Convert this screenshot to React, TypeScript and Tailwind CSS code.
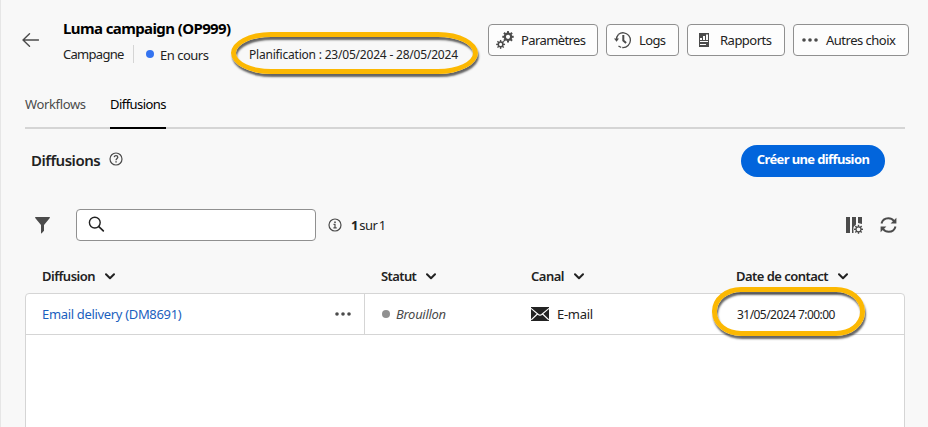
import React from 'react';

type IconProps = { className?: string };

function Gear({ cx, cy, r, teeth, w, stroke }: { cx: number; cy: number; r: number; teeth: number; w: number; stroke: number }) {
  return (
    <g>
      <circle cx={cx} cy={cy} r={r} fill="none" stroke="currentColor" strokeWidth={stroke} />
      {Array.from({ length: teeth }, (_, i) => (
        <rect
          key={i}
          x={cx - w / 2}
          y={cy - r - stroke / 2 - 1.4}
          width={w}
          height={2}
          fill="currentColor"
          transform={`rotate(${(360 / teeth) * i} ${cx} ${cy})`}
        />
      ))}
    </g>
  );
}

const GearsIcon = ({ className }: IconProps) => (
  <svg className={className} width="18" height="18" viewBox="0 0 18 18">
    <Gear cx={12} cy={5.8} r={3.2} teeth={8} w={2} stroke={2.2} />
    <Gear cx={4.6} cy={13.4} r={2.3} teeth={8} w={1.4} stroke={1.5} />
  </svg>
);

const HistoryIcon = ({ className }: IconProps) => (
  <svg className={className} width="18" height="18" viewBox="0 0 18 18" fill="none" stroke="currentColor">
    <path d="M4.6 3.2A7.4 7.4 0 1 1 4 14.600" strokeWidth="1.3" strokeDasharray="28 1 3 1 4 20" />
    <path d="M2.5 9A7.4 7.4 0 0 1 4.600 3.2" strokeWidth="1.3" />
    <path d="M0 7.500h5L2.6 10.800z" fill="currentColor" stroke="none" />
    <path d="M9.3 4v5.600l2.800 2.400" strokeWidth="2" />
  </svg>
);

const ReportIcon = ({ className }: IconProps) => (
  <svg className={className} width="10" height="14" viewBox="0 0 10 14">
    <path fill="currentColor" d="M0 0h10v14H0z" />
    <path fill="#fdfdfd" d="M1 5h2v2H1zM4 3h2v4H4zM7 1.500h2V7H7zM1 8h8v1H1zM1 11h6v1H1z" />
  </svg>
);

const MoreIcon = ({ className }: IconProps) => (
  <svg className={className} width="16" height="4" viewBox="0 0 16 4" fill="currentColor">
    <circle cx="2" cy="2" r="1.8" />
    <circle cx="8" cy="2" r="1.8" />
    <circle cx="14" cy="2" r="1.8" />
  </svg>
);

const Chevron = () => (
  <svg width="10" height="7" viewBox="0 0 10 7" fill="none" stroke="#222" strokeWidth="2" strokeLinecap="round" strokeLinejoin="round">
    <path d="M1 1.2 5 5.2 9 1.2" />
  </svg>
);

const BackIcon = () => (
  <svg width="17" height="14" viewBox="0 0 17 14" fill="none" stroke="#4b4b4b" strokeWidth="1.4" strokeLinecap="round" strokeLinejoin="round">
    <path d="M7.5 .8 1 7l6.5 6.2M1 7h15.5" />
  </svg>
);

const HelpIcon = () => (
  <svg width="14" height="14" viewBox="0 0 14 14" fill="none" stroke="#4b4b4b">
    <circle cx="7" cy="7" r="6" strokeWidth="1.2" />
    <path d="M5.2 5.2C5.4 4 6.2 3.7 7 3.7c1.1 0 1.8.7 1.8 1.5C8.8 6.400 7 6.600 7 8.300" strokeWidth="1.3" />
    <path d="M6.300 9.200h1.500v1.400H6.300z" fill="#4b4b4b" stroke="none" />
  </svg>
);

const InfoIcon = () => (
  <svg width="14" height="14" viewBox="0 0 14 14" fill="none" stroke="#4b4b4b">
    <circle cx="7" cy="7" r="6" strokeWidth="1.2" />
    <path d="M5.500 6.400H7v3.300M5.400 9.800h3.300" strokeWidth="1.200" />
    <path d="M6.200 3.500h1.600V5H6.200z" fill="#4b4b4b" stroke="none" />
  </svg>
);

const FilterIcon = () => (
  <svg width="15" height="17" viewBox="0 0 15 17" fill="#4b4b4b">
    <path d="M.6 0h13.800c.5 0 .7.500.4.900L9 8v5.800L6.500 16.400c-.2.200-.5 0-.5-.3V8L.2.900C-.1.500.1 0 .6 0z" />
  </svg>
);

const SearchIcon = () => (
  <svg width="17" height="17" viewBox="0 0 17 17" fill="none" stroke="#222" strokeLinecap="round">
    <circle cx="6.800" cy="6.600" r="5.400" strokeWidth="1.400" />
    <path d="m10.800 10.600 4.500 4.300" strokeWidth="1.700" />
  </svg>
);

const ColumnsIcon = () => (
  <svg width="17" height="17" viewBox="0 0 17 17" color="#4b4b4b">
    <path fill="currentColor" d="M0 0h4v16H0zM6 0h4v7.500L7.500 10v6H6zM12 0h4v7l-4-1z" />
    <circle cx="12.500" cy="12.300" r="4.800" fill="#f8f8f8" />
    <Gear cx={12.500} cy={12.300} r={2.500} teeth={8} w={1.400} stroke={1.200} />
  </svg>
);

const RefreshIcon = () => (
  <svg width="17" height="16" viewBox="0 0 17 16" fill="none" stroke="#4b4b4b" strokeWidth="2">
    <path d="M1.500 6.500C2.300 3.200 5 1.200 8.300 1.200c2.400 0 4.300 1 5.600 2.800M15.500 9.500c-.8 3.300-3.500 5.300-6.800 5.300-2.400 0-4.300-1-5.600-2.800" />
    <path d="M16.400.8v5.800h-5.800zM.6 15.200V9.400h5.800z" fill="#4b4b4b" stroke="none" />
  </svg>
);

const MailIcon = () => (
  <svg width="18" height="14" viewBox="0 0 18 14">
    <path fill="#222" d="M0 0h18v14H0z" />
    <path d="M0 1.300 7.300 7.500q1.700 1.300 3.400 0L18 1.300M.3 12.800 6.400 7M17.700 12.800 11.600 7" fill="none" stroke="#fff" strokeWidth="1.100" />
  </svg>
);

function ActionButton({ className, children }: { className: string; children: React.ReactNode }) {
  return (
    <button className={`flex h-8 items-center rounded-[4px] border border-[#909090] bg-[#fdfdfd] text-[#4b4b4b] ${className}`}>
      {children}
    </button>
  );
}

function HeaderCell({ label, className, gap }: { label: string; className: string; gap: string }) {
  return (
    <div className={`flex items-center font-semibold text-[#222] ${className}`}>
      <span className={gap}>{label}</span>
      <Chevron />
    </div>
  );
}

function Highlight({ className }: { className: string }) {
  return (
    <div
      className={`pointer-events-none absolute border-[5px] border-[#fcb802] shadow-[1px_3px_2px_rgba(0,0,0,0.6),inset_1px_3px_2px_rgba(0,0,0,0.6)] ${className}`}
    />
  );
}

export default function App() {
  return (
    <div className="h-[427px] w-[928px] overflow-hidden border-l border-[#e6e6e6] bg-[#f8f8f8] pl-6 font-['Noto_Sans','Open_Sans',sans-serif] text-[13px] leading-5 whitespace-nowrap text-[#222]">
      <header className="flex h-[82px] w-[884px]">
        <div className="w-[38px] shrink-0 pt-[33px]">
          <div className="-ml-[3px]"><BackIcon /></div>
        </div>
        <div className="w-[425px] shrink-0 pt-[18px]">
          <h1 className="text-[15px] leading-5 font-bold tracking-[-0.6px] text-black">Luma campaign (OP999)</h1>
          <div className="mt-[6px] flex h-5 items-center">
            <span className="w-[70px] tracking-[-0.7px]">Campagne</span>
            <span className="h-[18px] w-px bg-[#d5d5d5]" />
            <span className="ml-3 size-2 rounded-full bg-[#3574f0]" />
            <span className="ml-[6px] w-[51px] pt-px tracking-[-0.5px]">En cours</span>
            <div className="relative ml-[38px] pt-px text-[12px] tracking-[-0.2px]">
              Planification : 23/05/2024 - 28/05/2024
              <Highlight className="-top-[12px] -left-[18px] h-[42px] w-[247px] rounded-[40px/21px]" />
            </div>
          </div>
        </div>
        <div className="flex gap-2 pt-6">
          <ActionButton className="w-[110px]">
            <GearsIcon className="ml-[7px]" />
            <span className="ml-[7px] tracking-[-0.6px] text-[#222]">Paramètres</span>
          </ActionButton>
          <ActionButton className="w-[73px]">
            <HistoryIcon className="ml-[7px]" />
            <span className="ml-[7px] tracking-[-0.6px] text-[#222]">Logs</span>
          </ActionButton>
          <ActionButton className="w-[98px]">
            <ReportIcon className="ml-[11px]" />
            <span className="ml-[11px] tracking-[-0.5px] text-[#222]">Rapports</span>
          </ActionButton>
          <ActionButton className="w-[116px]">
            <MoreIcon className="ml-2" />
            <span className="ml-2 tracking-[-0.5px] text-[#222]">Autres choix</span>
          </ActionButton>
        </div>
      </header>

      <nav className="flex h-[47px] w-[880px] gap-6 border-b-2 border-[#d5d5d5] pt-3 text-[#4b4b4b]">
        <div className="w-[61px] tracking-[-0.35px]">Workflows</div>
        <div className="h-[35px] w-14 border-b-2 border-black tracking-[-0.55px] text-black">Diffusions</div>
      </nav>

      <section className="flex h-[63px] w-[880px] items-center pr-5 pl-[6px]">
        <h2 className="w-[78px] pb-[2px] text-[15px] font-semibold tracking-[-0.45px]">Diffusions</h2>
        <div className="pb-[3px]"><HelpIcon /></div>
        <button className="ml-auto h-8 w-[144px] rounded-full bg-[#0265dc] pb-[3px] font-bold tracking-[-0.62px] text-white">
          Créer une diffusion
        </button>
      </section>

      <div className="mt-[17px] flex h-8 w-[880px] items-center pr-2 pl-[10px]">
        <FilterIcon />
        <div className="ml-[26px] flex h-8 w-[240px] items-center rounded-[4px] border border-[#909090] bg-white pb-px pl-[11px]">
          <SearchIcon />
        </div>
        <div className="ml-3 flex items-center gap-[9px]">
          <InfoIcon />
          <span className="tracking-[-0.5px] [word-spacing:-1.5px]"><b>1</b> sur 1</span>
        </div>
        <div className="ml-auto flex items-center gap-[17px]">
          <ColumnsIcon />
          <RefreshIcon />
        </div>
      </div>

      <div className="mt-[18px] flex h-[34px] w-[880px] items-center pl-[17px]">
        <HeaderCell label="Diffusion" className="w-[339px]" gap="w-[63px] tracking-[-0.5px]" />
        <HeaderCell label="Statut" className="w-[150px]" gap="w-[45px] tracking-[-0.6px]" />
        <HeaderCell label="Canal" className="w-[205px]" gap="w-[43px] tracking-[-0.5px]" />
        <HeaderCell label="Date de contact" className="" gap="w-[102px] tracking-[-0.53px]" />
      </div>

      <div className="h-[140px] w-[880px] rounded-t-[4px] border border-[#d5d5d5] bg-white">
        <div className="flex h-[41px] items-center border-b border-[#d5d5d5]">
          <div className="flex h-full w-[339px] items-center border-r border-[#d5d5d5] pl-4">
            <a className="w-[293px] tracking-[-0.33px] text-[#1b5fbe]">Email delivery (DM8691)</a>
            <MoreIcon className="text-[#4b4b4b]" />
          </div>
          <div className="flex w-[166px] items-center pl-[17px]">
            <span className="size-2 rounded-full bg-[#909090]" />
            <span className="ml-[6px] tracking-[-0.3px] text-[#4b4b4b] italic">Brouillon</span>
          </div>
          <div className="flex w-[206px] items-center">
            <MailIcon />
            <span className="ml-2 tracking-[-0.3px]">E-mail</span>
          </div>
          <div className="relative pt-[2px] text-[12px] tracking-[-0.55px]">
            31/05/2024 7:00:00
            <Highlight className="-top-[16px] -left-[25px] h-[49px] w-[153px] rounded-[29px/24px]" />
          </div>
        </div>
      </div>
    </div>
  );
}
